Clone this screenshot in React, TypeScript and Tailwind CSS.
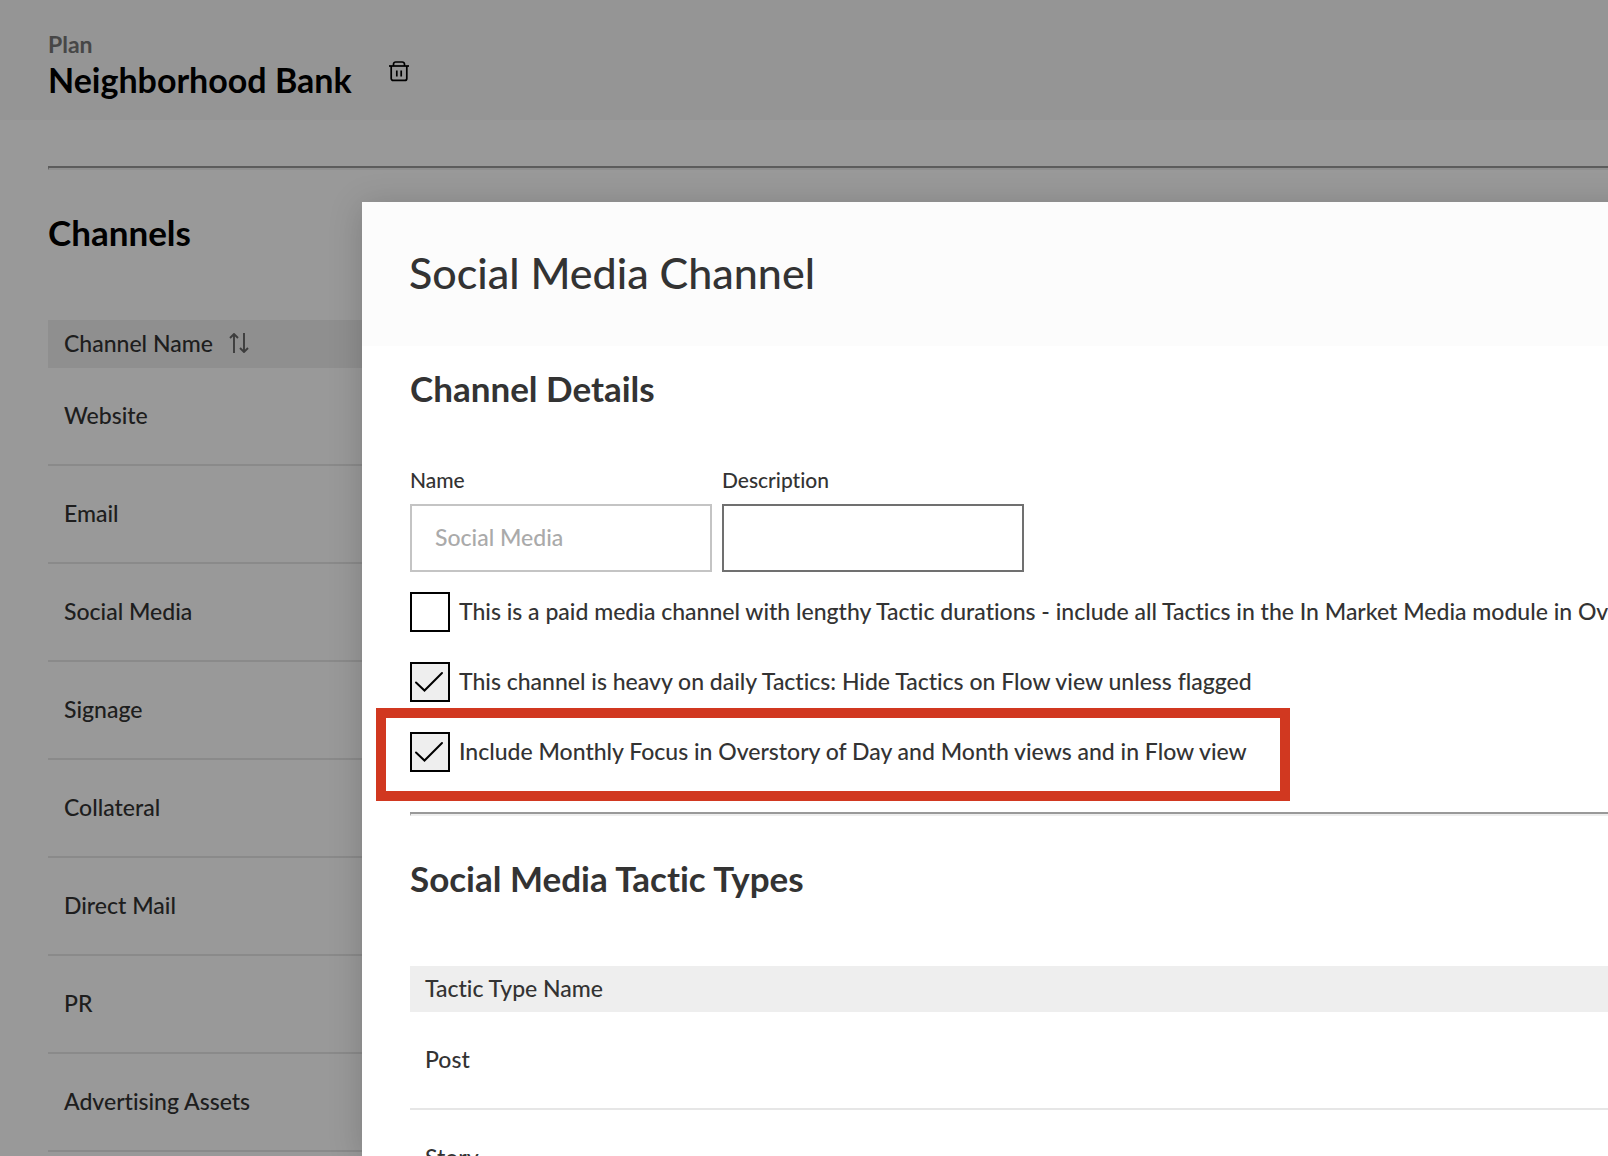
import { useId, useState } from "react";

const channels = [
  "Website",
  "Email",
  "Social Media",
  "Signage",
  "Collateral",
  "Direct Mail",
  "PR",
  "Advertising Assets",
];

const tacticTypes = ["Post", "Story"];

function TrashIcon() {
  return (
    <svg viewBox="0 0 22 22" className="size-[22px]" fill="none" stroke="currentColor" strokeWidth="1.7" aria-hidden="true">
      <path d="M1 6h20" />
      <path d="M5.5 6V4.2A2.2 2.2 0 0 1 7.7 2h6.6a2.2 2.2 0 0 1 2.2 2.2V6" />
      <path d="M3.2 6v12.4A2 2 0 0 0 5.2 20.4h11.6a2 2 0 0 0 2-2V6" />
      <path d="M8.8 10.5v6M13.2 10.5v6" />
    </svg>
  );
}

function SortIcon() {
  return (
    <svg viewBox="0 0 20 20" className="size-5" fill="none" stroke="#666" strokeWidth="1.9" aria-hidden="true">
      <path d="M5 20V1M1 5l4-4 4 4" />
      <path d="M15 0v19M11 15l4 4 4-4" />
    </svg>
  );
}

function Divider() {
  return <hr className="h-1 border-t-2 border-r-0 border-b-2 border-l border-t-[#999] border-b-[#eee] border-l-[#999]" />;
}

function Check({ label, initial }: { label: string; initial: boolean }) {
  const [on, setOn] = useState(initial);
  return (
    <label className="flex items-center gap-[9px] whitespace-nowrap">
      <span className="grid size-10 shrink-0">
        <input
          type="checkbox"
          checked={on}
          onChange={(e) => setOn(e.target.checked)}
          className="col-start-1 row-start-1 size-10 appearance-none border-2 border-black bg-white checked:bg-[#eee]"
        />
        {on && (
          <svg viewBox="0 0 40 40" className="pointer-events-none col-start-1 row-start-1 size-10" fill="none" stroke="#000" strokeWidth="2" strokeLinecap="round" aria-hidden="true">
            <path d="M6 20.5l8.5 8L32 11" />
          </svg>
        )}
      </span>
      <span className="pb-0.5">{label}</span>
    </label>
  );
}

function Field({ label, value, disabled }: { label: string; value: string; disabled?: boolean }) {
  const id = useId();
  return (
    <div className="flex w-[302px] flex-col gap-[10px]">
      <label htmlFor={id} className="text-[21px] leading-7">
        {label}
      </label>
      <input
        id={id}
        type="text"
        defaultValue={value}
        disabled={disabled}
        className="h-[68px] w-full border-2 border-[#707070] bg-white px-[23px] pb-0.5 disabled:border-[#c4c4c4] disabled:text-[#aaa]"
      />
    </div>
  );
}

export default function App() {
  return (
    <div className="relative h-screen overflow-hidden bg-white font-['Lato',sans-serif] text-[23px] leading-[30px] font-medium text-[#333] [font-variant-ligatures:none]">
      <header className="flex h-[120px] items-start gap-9 bg-[#f8f8f8] pt-7 pl-12 text-black">
        <div>
          <p className="leading-8 font-bold text-[#777]">Plan</p>
          <h1 className="text-[34px] leading-10 font-bold">Neighborhood Bank</h1>
        </div>
        <button type="button" aria-label="Delete plan" className="mt-8">
          <TrashIcon />
        </button>
      </header>

      <main className="pt-[46px] pl-12">
        <Divider />
        <h2 className="mt-[42px] text-[35px] leading-10 font-bold text-black">Channels</h2>
        <table className="mt-[68px] w-full border-collapse text-left">
          <thead>
            <tr className="h-12 bg-[#eee]">
              <th scope="col" className="pb-0.5 pl-4 font-medium">
                <button type="button" className="flex items-center gap-4">
                  Channel Name
                  <SortIcon />
                </button>
              </th>
            </tr>
          </thead>
          <tbody>
            {channels.map((name) => (
              <tr key={name}>
                <td className="p-0">
                  <div className="h-[98px] border-b-2 border-[#e6e6e6] pt-8 pl-4">{name}</div>
                </td>
              </tr>
            ))}
          </tbody>
        </table>
      </main>

      <div className="absolute inset-0 bg-black/40 pt-[202px] pl-[362px]">
        <section role="dialog" aria-label="Social Media Channel" className="-mr-12 h-full bg-white shadow-[0_4px_32px_rgba(0,0,0,0.18)]">
          <header className="flex h-36 items-center bg-[#fcfcfc] pb-0.5 pl-[47px]">
            <h2 className="text-[43px] leading-[48px] font-medium">Social Media Channel</h2>
          </header>
          <div className="pt-[22px] pl-12">
            <h3 className="text-[35px] leading-10 font-bold">Channel Details</h3>
            <div className="mt-[58px] flex gap-[10px]">
              <Field label="Name" value="Social Media" disabled />
              <Field label="Description" value="" />
            </div>
            <div className="relative mt-5 mb-10 flex flex-col gap-[30px]">
              <Check label="This is a paid media channel with lengthy Tactic durations - include all Tactics in the In Market Media module in Overview" initial={false} />
              <Check label="This channel is heavy on daily Tactics: Hide Tactics on Flow view unless flagged" initial />
              <Check label="Include Monthly Focus in Overstory of Day and Month views and in Flow view" initial />
              <div className="pointer-events-none absolute top-[116px] -left-[34px] h-[93px] w-[914px] border-[10px] border-[#d13820]" />
            </div>
            <Divider />
            <h3 className="mt-[42px] text-[35px] leading-10 font-bold">Social Media Tactic Types</h3>
            <table className="mt-[68px] w-full border-collapse text-left">
              <thead>
                <tr className="h-[46px] bg-[#eee]">
                  <th scope="col" className="pb-0.5 pl-[15px] font-medium">Tactic Type Name</th>
                </tr>
              </thead>
              <tbody>
                {tacticTypes.map((name) => (
                  <tr key={name}>
                    <td className="p-0">
                      <div className="h-[98px] border-b-2 border-[#e6e6e6] pt-8 pl-[15px]">{name}</div>
                    </td>
                  </tr>
                ))}
              </tbody>
            </table>
          </div>
        </section>
      </div>
    </div>
  );
}
